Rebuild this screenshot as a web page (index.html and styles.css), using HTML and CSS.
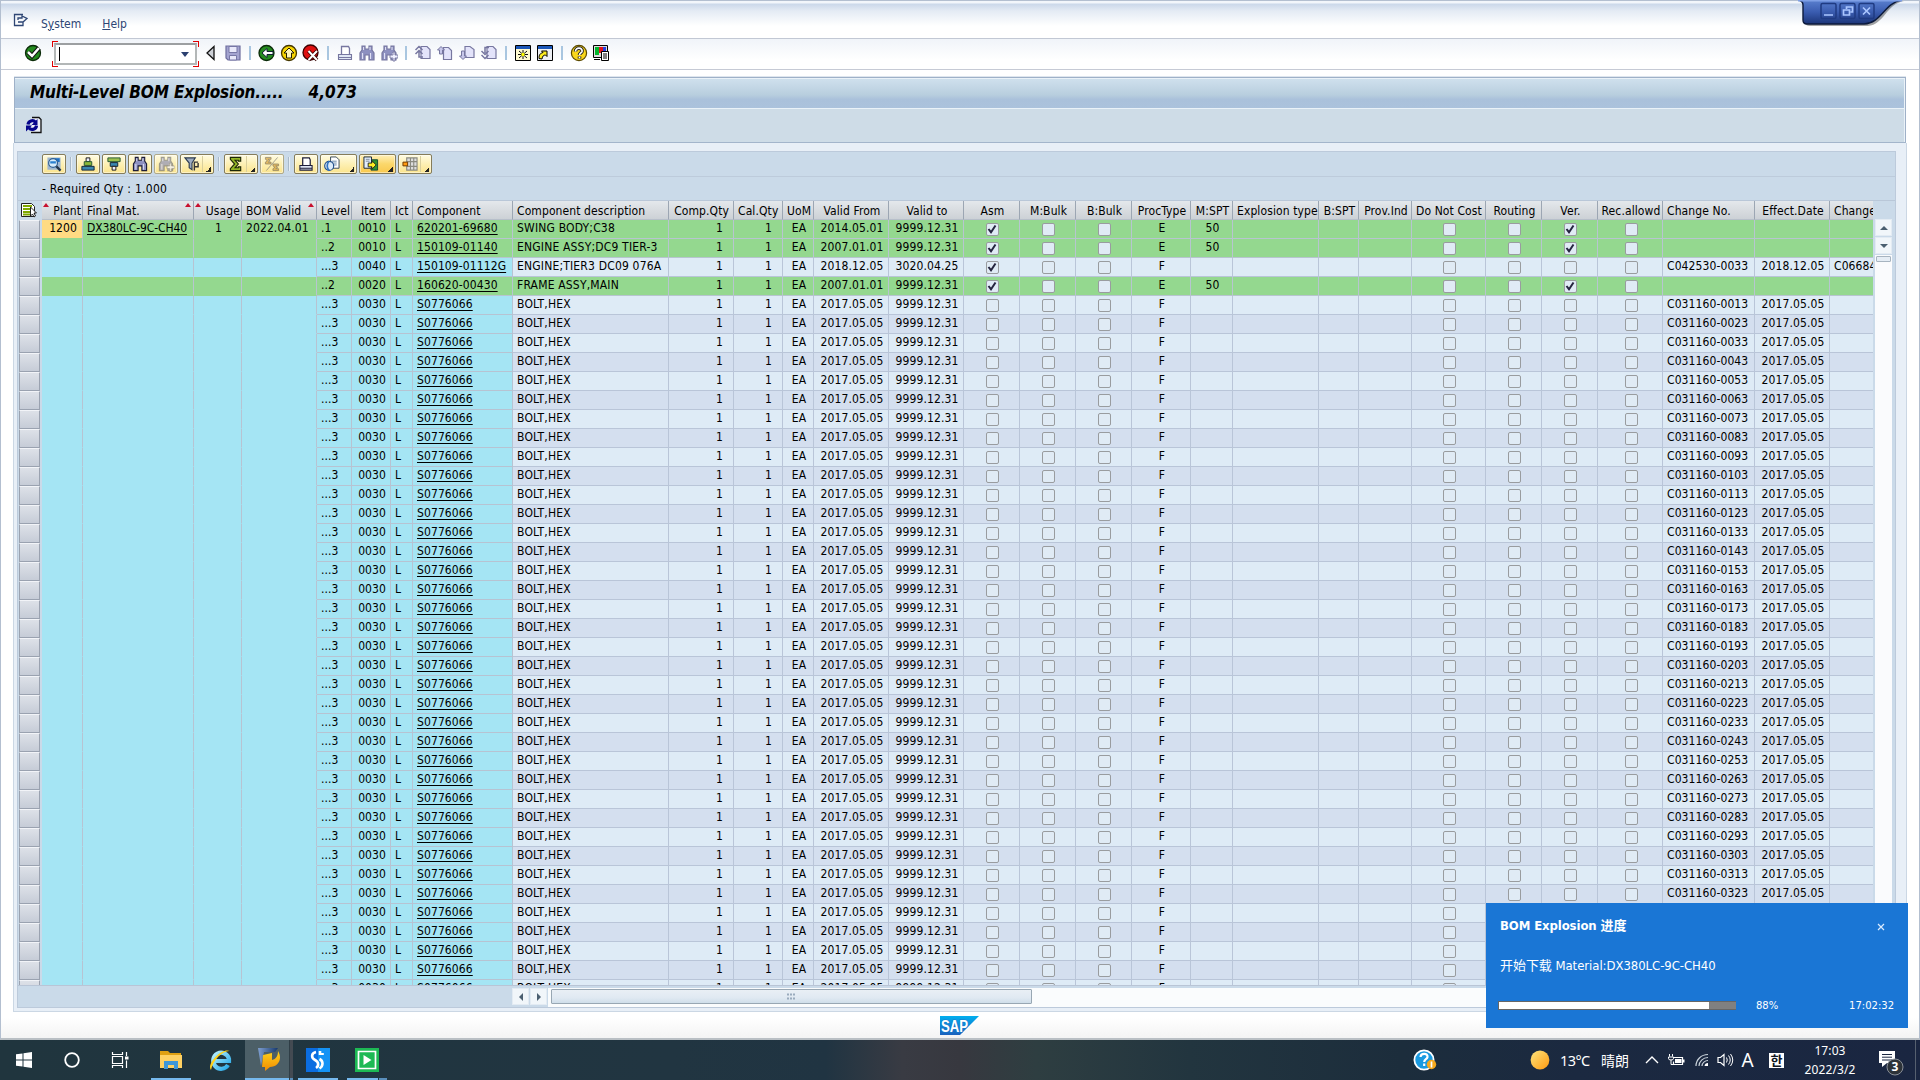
FILE: index.html
```html
<!DOCTYPE html>
<html lang="en">
<head>
<meta charset="utf-8">
<title>Multi-Level BOM Explosion</title>
<link rel="stylesheet" href="styles.css">
</head>
<body>
<svg width="0" height="0" class="defs">
  <defs>
    <linearGradient id="winBlue" x1="0" y1="0" x2="0" y2="1"><stop offset="0" stop-color="#5a80cf"/><stop offset=".5" stop-color="#3a5cb0"/><stop offset="1" stop-color="#1c3578"/></linearGradient>
    <linearGradient id="sapBlue" x1="0" y1="0" x2="0" y2="1"><stop offset="0" stop-color="#00aeef"/><stop offset="1" stop-color="#1a61bd"/></linearGradient>
    <linearGradient id="sun" x1="0" y1="0" x2="1" y2="1"><stop offset="0" stop-color="#ffe57d"/><stop offset="1" stop-color="#ff9a10"/></linearGradient>
    <linearGradient id="steel" x1="0" y1="0" x2="1" y2="0"><stop offset="0" stop-color="#7f9fd0"/><stop offset="1" stop-color="#16386d"/></linearGradient>
    <linearGradient id="gold" x1="0" y1="0" x2="0" y2="1"><stop offset="0" stop-color="#ffd21c"/><stop offset="1" stop-color="#f08a00"/></linearGradient>
    <linearGradient id="ie" x1="0" y1="0" x2="1" y2="1"><stop offset="0" stop-color="#b9f1ff"/><stop offset="1" stop-color="#23a8e8"/></linearGradient>
    <symbol id="find" viewBox="0 0 18 18"><path d="M4 2h3v3h4V2h3v4l2 3v7h-5v-5H7v5H2V9l2-3z" fill="#8d90c0" stroke="currentColor" stroke-width="1.2"/><path d="M4.6 9v6M12.6 9v6M5.6 3v3M12 3v3" stroke="#e8e8fa"/></symbol>
    <symbol id="findnext" viewBox="0 0 18 18"><use href="#find"/><path d="M10 11h3V8h2v3h3v3h-3v3h-2v-3h-3z" fill="#f0f0ff" stroke="currentColor" stroke-width=".9"/></symbol>
    <symbol id="print" viewBox="0 0 18 18"><path d="M5.500 10.500V2.500h7l1 2v6" fill="#fff" stroke="currentColor" stroke-width="1.300"/><path d="M2.500 10.500h13v3h-13zM2.500 13.500h13v2h-13z" fill="#dfe6f4" stroke="currentColor" stroke-width="1.100"/></symbol>
  </defs>
</svg>

<main class="window">
  <header class="menubar">
    <svg class="menu-icon" width="16" height="14" viewBox="0 0 16 14"><path d="M10 9.500v3H1.500V1.500H10M5 7V5h4V3l5 2.500-4 3.500H5" fill="none" stroke="#2e4674" stroke-width="1.300"/></svg>
    <span class="menu-item">S<u>y</u>stem</span>
    <span class="menu-item"><u>H</u>elp</span>
    <svg class="win-controls" width="106" height="30" viewBox="0 0 106 30">
      <path d="M2 1q5 1 5 6v15q0 4 5 4h58c16-1 18-22 36-25z" fill="#000" opacity=".35"/>
      <path d="M0 0q5 1 5 5v15q0 4 4 4h57C84 23 86 3 104 0z" fill="url(#winBlue)" stroke="#0c1a3c" stroke-width="1.400"/>
      <path d="M0 0h104" stroke="#7fa0e6" stroke-width="3"/>
      <g fill="none" stroke="#1f3b82" stroke-width="1.500"><rect x="23" y="3.500" width="15" height="15" rx="1.500"/><rect x="42" y="3.500" width="15" height="15" rx="1.500"/><rect x="61" y="3.500" width="15" height="15" rx="1.500"/></g>
      <g fill="none" stroke="#aac6ff" stroke-width="1.700"><path d="M26 15h9M45.500 10h6v5h-6zM48.500 9V7h6v5h-2M65 7.500l7 7M72 7.500l-7 7"/></g>
    </svg>
  </header>

  <nav class="toolbar">
    <svg width="18" height="18" viewBox="0 0 18 18"><circle cx="9" cy="9" r="7.500" fill="#238a1e" stroke="#0a2a08" stroke-width="1.300"/><path d="M4 8l4 4 7-8" fill="none" stroke="#111" stroke-width="4.500"/><path d="M4 8l4 4 7-8" fill="none" stroke="#fff" stroke-width="2.500"/></svg>
    <div class="command"><div class="command-box"><i class="caret"></i><i class="drop"></i></div></div>
    <svg class="tri" width="18" height="18" viewBox="0 0 18 18"><path d="M12 2.500v13L5 9z" fill="#cdd0d6" stroke="#111" stroke-width="1.300"/></svg>
    <svg width="18" height="18" viewBox="0 0 18 18"><path d="M2 2h14v14H4l-2-2z" fill="#a4a4d0" stroke="#6e6e9e" stroke-width="1.200"/><path d="M5 2.500h8v6H5zM5.500 11.500h7V16h-7z" fill="#e9e9fa" stroke="#7777a6"/></svg>
    <i class="sep"></i>
    <svg width="18" height="18" viewBox="0 0 18 18"><circle cx="8.500" cy="9" r="7.500" fill="#248b1f" stroke="#0a2a08" stroke-width="1.300"/><path d="M4 9l5-4.500v3h6v3H9v3z" fill="#fff" stroke="#123" stroke-width="1"/></svg>
    <svg width="18" height="18" viewBox="0 0 18 18"><circle cx="9" cy="9" r="7.500" fill="#f7d400" stroke="#443600" stroke-width="1.300"/><path d="M9 4l5 5h-2.500v5h-5V9H4z" fill="#fff6b8" stroke="#221c00" stroke-width="1"/></svg>
    <svg width="18" height="18" viewBox="0 0 18 18"><circle cx="8.500" cy="8.500" r="7.500" fill="#de1010" stroke="#3c0000" stroke-width="1.300"/><path d="M6.500 7l8.500 9M15 7l-8.500 9" stroke="#300" stroke-width="3.600"/><path d="M6.500 7l8.500 9M15 7l-8.500 9" stroke="#fff" stroke-width="2"/></svg>
    <i class="sep"></i>
    <svg class="dim" width="18" height="18"><use href="#print"/></svg>
    <svg class="dim" width="18" height="18"><use href="#find"/></svg>
    <svg class="dim" width="18" height="18"><use href="#findnext"/></svg>
    <i class="sep"></i>
    <svg width="18" height="18" viewBox="0 0 18 18"><path d="M7 2.500h6l3 3v9H7z" fill="#e3e3fa" stroke="#7777a0" stroke-width="1.200"/><path d="M1.500 6L5 2.500 8.500 6M1.500 10L5 6.500 8.500 10M5 8v5h4" fill="none" stroke="#7777a0" stroke-width="1.500"/></svg>
    <svg width="18" height="18" viewBox="0 0 18 18"><path d="M7.500 3.500h5l3 3v9h-8z" fill="#e3e3fa" stroke="#7777a0" stroke-width="1.200"/><path d="M1.500 6L5 2.500 8.500 6H6.500v4h-3V6z" fill="#c7c7ea" stroke="#7777a0"/></svg>
    <svg width="18" height="18" viewBox="0 0 18 18"><path d="M7 2.500h5l4 3v8H7z" fill="#e3e3fa" stroke="#7777a0" stroke-width="1.200"/><path d="M1.500 12L5 15.500 8.500 12H6.500V7h-3v5z" fill="#c7c7ea" stroke="#7777a0"/></svg>
    <svg width="18" height="18" viewBox="0 0 18 18"><path d="M7 2.500h6l3 3v9H7z" fill="#e3e3fa" stroke="#7777a0" stroke-width="1.200"/><path d="M1.500 7L5 10.500 8.500 7M1.500 11L5 14.500 8.500 11M5 9V3.500h4" fill="none" stroke="#7777a0" stroke-width="1.500"/></svg>
    <i class="sep"></i>
    <svg width="18" height="18" viewBox="0 0 18 18"><path d="M1.500 1.500h15v15h-15z" fill="#fffbd0" stroke="#000"/><path d="M2 2h14v3H2z" fill="#1a56b8"/><path d="M9 6v9M4 10.500h10M5 7l8 7M13 7l-8 7" stroke="#111"/><circle cx="9" cy="10.500" r="1.700" fill="#ff0"/></svg>
    <svg width="18" height="18" viewBox="0 0 18 18"><path d="M1.500 1.500h15v15h-15z" fill="#eef0f4" stroke="#000"/><path d="M2 2h14v3H2z" fill="#1a56b8"/><path d="M3 14.500c0-4 1-5 4-6L5.500 7H11v5.500L9.500 11c-2 0-3 1-3.500 4z" fill="#ffee20" stroke="#000"/></svg>
    <i class="sep"></i>
    <svg width="18" height="18" viewBox="0 0 18 18"><circle cx="9" cy="9" r="7.600" fill="#f9d71c" stroke="#5c4a00" stroke-width="1.200"/><path d="M5.500 7.500c0-5 7.500-4 6.500 0-.5 1.500-2.500 1.500-2.500 3.500M9.500 12.500v2" fill="none" stroke="#222" stroke-width="3.600"/><path d="M5.500 7.500c0-5 7.500-4 6.500 0-.5 1.500-2.500 1.500-2.500 3.500M9.500 12.700v1.600" fill="none" stroke="#fff" stroke-width="1.700"/></svg>
    <svg width="18" height="18" viewBox="0 0 18 18"><path d="M1.500 1.500h14v12h-14z" fill="#ddd" stroke="#000"/><path d="M3 3h4v8H3z" fill="#00b52a"/><path d="M7 3h4v6H7z" fill="#e3121a"/><path d="M11 3h3v6h-3z" fill="#2440e0"/><path d="M2 15.500h6" stroke="#000"/><path d="M9.500 7.500h7v9h-7z" fill="#fff" stroke="#000"/><path d="M11 10h4M11 12h4M11 14h4" stroke="#000"/></svg>
  </nav>

  <section class="title-panel">
    <h1 class="title">Multi-Level BOM Explosion.....<span>4,073</span></h1>
    <div class="app-bar">
      <svg width="18" height="18" viewBox="0 0 18 18"><path d="M7 1.500h7l2 2v13H6" fill="#eef2fa" stroke="#111" stroke-width="1.300"/><path d="M3 8.500a4.300 4.300 0 0 1 7.500-2.300M11.500 9.500a4.300 4.300 0 0 1-7.500 2.500" fill="none" stroke="#06068c" stroke-width="3.200"/><path d="M12.500 3v6H6.500zM1 15.500V9.500h6z" fill="#06068c"/></svg>
    </div>
  </section>

  <section class="content">
    <div class="alv">
      <div class="alv-bar">
        <span class="btn"><svg width="18" height="18" viewBox="0 0 18 18"><path d="M2 2h14v13H2z" fill="#9fb6cf"/><path d="M10 3h5v4h-5z" fill="#1c6fc4"/><circle cx="8" cy="8" r="4.700" fill="#d8ecfb" stroke="#2f5f92" stroke-width="1.300"/><path d="M5 6h6v2.500H5z" fill="#2b80cf"/><path d="M11.500 11.500l4.500 4.500" stroke="#24364c" stroke-width="2.400"/></svg></span>
        <i class="bar-sep"></i>
        <span class="btn"><svg width="18" height="18" viewBox="0 0 18 18"><path d="M7 2.500h4v4H7z" fill="#eef" stroke="#111"/><path d="M5 6.500h8v4H5z" fill="#8bb83a" stroke="#253"/><path d="M2.500 11.500h13v4h-13z" fill="#3b86b0" stroke="#123"/></svg></span>
        <span class="btn"><svg width="18" height="18" viewBox="0 0 18 18"><path d="M2.500 2.500h13v4h-13z" fill="#9cc04e" stroke="#253"/><path d="M5 7.500h8v4H5z" fill="#3b86b0" stroke="#123"/><path d="M7 11.500h4v4H7z" fill="#eef" stroke="#111"/></svg></span>
        <span class="btn dark"><svg width="18" height="18"><use href="#find"/></svg></span>
        <span class="btn off"><svg width="18" height="18"><use href="#findnext"/></svg></span>
        <span class="btn split"><svg width="18" height="18" viewBox="0 0 18 18"><path d="M1.500 2.500h11L9 8v7l-3-2V8z" fill="#9cabc0" stroke="#2c3b50" stroke-width="1.200"/><path d="M11.500 16V7h4M11.500 12h4V8" fill="none" stroke="#333" stroke-width="1.500"/></svg></span>
        <i class="bar-sep"></i>
        <span class="btn split"><svg width="18" height="18" viewBox="0 0 18 18"><path d="M3 2h11v4h-2.500V5H8l3.500 4L8 13h3.500v-1H14v4H3v-2l4.500-5L3 4z" fill="#93b526" stroke="#1c2606" stroke-width="1.200"/></svg></span>
        <span class="btn off"><svg width="18" height="18" viewBox="0 0 18 18"><path d="M2 2h6v2H5l2 1.500L5 7h3v2H2V7l2-1.500L2 4zM10 9h6v2h-3l2 1.500-2 1.500h3v2h-6v-2l2-1.500L10 11z" fill="#e8a010" stroke="#654" stroke-width=".8"/><path d="M3 16L15 2" stroke="#777"/></svg></span>
        <i class="bar-sep"></i>
        <span class="btn ink"><svg width="18" height="18"><use href="#print"/></svg></span>
        <span class="btn wide"><svg width="18" height="18" viewBox="0 0 18 18"><path d="M7.500 1.500h6l3 3v9h-9z" fill="#fff" stroke="#345"/><path d="M9 6h5M9 8h5M9 10h5" stroke="#68a"/><circle cx="6" cy="11" r="4.800" fill="#dcecfa" stroke="#23508c" stroke-width="1.200"/><path d="M6 6a7 7 0 0 0 0 10" fill="none" stroke="#3374c0" stroke-width="1.800"/></svg></span>
        <span class="btn wide hot"><svg width="18" height="18" viewBox="0 0 18 18"><path d="M9 4.500h7v11H9z" fill="#2f9130" stroke="#143"/><path d="M1.500 1.500h8v12h-8z" fill="#e4eefb" stroke="#123"/><path d="M3.500 4h4M3.500 6h4" stroke="#789"/><path d="M6 8h4V5.500l4.500 4.500-4.500 4.500V12H6z" fill="#ffee22" stroke="#222"/></svg></span>
        <span class="btn split"><svg width="18" height="18" viewBox="0 0 18 18"><path d="M5.500 2.500h11v13h-11zM9.500 2.500v13M13 2.500v13M5 6.500h11M5 11.500h11" fill="#ddd" stroke="#8a8a80" stroke-width="1.200"/><path d="M1.500 7h5v4h-5z" fill="#ff9a10" stroke="#6b3800"/></svg></span>
      </div>
      <div class="required">- Required Qty : 1.000</div>
      <div class="table-area">
        <div class="grid" id="grid"></div>
        <div class="vscroll"><span class="sb up"></span><span class="sb down"></span><span class="vtrack"><i class="vthumb"></i></span></div>
      </div>
      <div class="hscroll"><span class="sb left"></span><span class="sb right"></span><span class="htrack"><i class="hthumb"><svg width="9" height="7" viewBox="0 0 9 7"><path d="M0 1.500h9M0 5.500h9" stroke="#9aabbd" stroke-width="2" stroke-dasharray="2 1"/></svg></i></span></div>
    </div>
  </section>

  <footer class="status">
    <svg width="39" height="19" viewBox="0 0 39 19"><path d="M0 0h39L20 19H0z" fill="url(#sapBlue)"/><text x="1" y="15.500" class="sap-word" textLength="27" lengthAdjust="spacingAndGlyphs">SAP</text></svg>
  </footer>
</main>

<aside class="toast">
  <div class="toast-head"><strong>BOM Explosion 进度</strong><svg width="8" height="8" viewBox="0 0 8 8"><path d="M1 1l6 6M7 1L1 7" stroke="#dcecff" stroke-width="1.200"/></svg></div>
  <p class="toast-text">开始下载 Material:DX380LC-9C-CH40</p>
  <div class="toast-foot"><span class="progress"><i style="width:88.500%"></i></span><span class="pct">88%</span><span class="time">17:02:32</span></div>
</aside>

<footer class="taskbar">
  <div class="apps">
    <span class="app"><svg width="16" height="16" viewBox="0 0 16 16"><path d="M0 2.300l6.500-.9v6.100H0zM7.500 1.200L16 0v7.500H7.500zM0 8.500h6.500v6.100L0 13.700zM7.500 8.500H16V16l-8.500-1.200z" fill="#fff"/></svg></span>
    <span class="app"><svg width="18" height="18" viewBox="0 0 18 18"><circle cx="9" cy="9" r="6.800" fill="none" stroke="#fff" stroke-width="1.800"/></svg></span>
    <span class="app"><svg width="18" height="18" viewBox="0 0 18 18"><path d="M1.500 1v2.500h10V1M1.500 17v-2.500h10V17M1.500 5.500h10v7h-10zM15.500 1v4M15.500 9.500V17" fill="none" stroke="#fff" stroke-width="1.200"/><path d="M14 5.500h3.500v3H14z" fill="#fff"/></svg></span>
    <span class="app run first"><svg width="24" height="20" viewBox="0 0 24 20"><path d="M1 1h8l2 2h11v15H1z" fill="#e0a012"/><path d="M1 5h22v13H1z" fill="#ffd163"/><path d="M5 19v-8h14v8h-4v-4H9v4z" fill="#3f97d8"/></svg></span>
    <span class="app"><svg width="24" height="24" viewBox="0 0 24 24"><path d="M20 17a8 8 0 1 1 1-6v2H7" fill="none" stroke="url(#ie)" stroke-width="4.200"/><path d="M3 22C-2 16 14-1 22 3c-6-1-17 8-19 19z" fill="#ffd21c"/></svg></span>
    <span class="app run active"><svg width="24" height="24" viewBox="0 0 24 24"><path d="M1 0h20l-3 4H7l-3 14z" fill="url(#steel)"/><path d="M6 7l9-2v7c4-1 6-4 6-9 5 8 0 16-8 16l-5 4V19H5z" fill="url(#gold)"/></svg></span>
    <span class="app run"><svg width="24" height="24" viewBox="0 0 24 24"><path d="M0 0h24v24H0z" fill="#0b6de0"/><path d="M12 0h12v24H12z" fill="#1593f5"/><path d="M10 4C5 5 5 10 9 12s4 6 1 8M14 3v4M13.500 11c4 2 4 7 0 9.500M16.500 5v2" fill="none" stroke="#fff" stroke-width="2.600"/></svg></span>
    <span class="app run pair"><svg width="24" height="24" viewBox="0 0 24 24"><path d="M0 0h24v24H0z" fill="#1db954"/><path d="M3.500 3.500h17v17h-17z" fill="none" stroke="#fff" stroke-width="1.700"/><path d="M8.500 7l8 5-8 5z" fill="#fff"/></svg></span>
  </div>
  <div class="tray">
    <svg class="help" width="24" height="22" viewBox="0 0 24 22"><circle cx="11" cy="11" r="9.600" fill="#1a9ae0" stroke="#fff" stroke-width="1.800"/><path d="M7.500 8c.5-4.500 7.500-4 7 0-.3 2.300-3.300 2.200-3.300 5M11.200 14.500V17" fill="none" stroke="#fff" stroke-width="2.200"/><circle cx="18.500" cy="15.500" r="4.700" fill="#f5a81c"/><path d="M18.500 12.500v6" stroke="#fff" stroke-width="1.700"/></svg>
    <svg class="sun" width="20" height="20" viewBox="0 0 20 20"><circle cx="10" cy="10" r="9.400" fill="url(#sun)"/></svg>
    <span class="temp">13°C</span><span class="sky">晴朗</span>
    <svg class="chev" width="14" height="8" viewBox="0 0 14 8"><path d="M1 7l6-6 6 6" fill="none" stroke="#fff" stroke-width="1.400"/></svg>
    <svg class="bat" width="17" height="13" viewBox="0 0 17 13"><path d="M5.500 3.500h9v7h-9v-3" fill="none" stroke="#fff" stroke-width="1.200"/><path d="M7 5h6.500v4H7zM15 5.500h1.500v3H15z" fill="#fff"/><path d="M1.500 0v2.500M4.500 0v2.500M.5 3h5v1.500q0 1.500-2.500 1.500T.5 4.500zM3 6v4.500h3" fill="none" stroke="#fff"/></svg>
    <svg class="wifi" width="14" height="14" viewBox="0 0 14 14"><path d="M1 13C1 7 6 1.500 13 1.500M4 13c0-4.500 4-8.500 9-8.500M7 13c0-3 3-5.500 6-5.500" fill="none" stroke="#c9d2da" stroke-width="1.200"/><path d="M9.500 13a3.500 3.500 0 0 1 3.500-3v3z" fill="#fff"/></svg>
    <svg class="vol" width="17" height="14" viewBox="0 0 17 14"><path d="M1 4.500h2.500L7 1.500v11l-3.500-3H1z" fill="none" stroke="#fff" stroke-width="1.200"/><path d="M9.500 4.500q1.500 2.500 0 5M11.500 2.500q3.500 4.500 0 9M13.500 1q4.500 6 0 12" fill="none" stroke="#fff"/></svg>
    <span class="ime">A</span>
    <span class="han">한</span>
    <span class="clock">17:03<br>2022/3/2</span>
    <svg class="notif" width="26" height="26" viewBox="0 0 26 26"><path d="M1 1h16v12H9l-5 4v-4H1z" fill="#fff"/><path d="M4 4.500h10M4 7.200h10M4 10h10" stroke="#1b2740"/><circle cx="17" cy="17" r="8" fill="#2c3238" stroke="#8a9098"/><text x="17" y="21.200" class="badge">3</text></svg>
    <i class="peek"></i>
  </div>
</footer>
<script src="app.js"></script>
</body>
</html>
```
FILE: styles.css
```css
* { box-sizing: border-box; }
body {
  margin: 0;
  width: 1920px;
  height: 1080px;
  overflow: hidden;
  font-family: "DejaVu Sans Condensed", "DejaVu Sans", "Noto Sans CJK SC", sans-serif;
  font-stretch: condensed;
  font-size: 12px;
  color: #000;
  background: #fff;
  display: flex;
  flex-direction: column;
}
svg { display: block; flex: none; }
.defs { position: absolute; }

.window {
  height: 1040px;
  flex: none;
  display: flex;
  flex-direction: column;
  border: 1px solid #b3bfd0;
  border-bottom: 2px solid #b9bfc4;
  background: linear-gradient(#fff 98%, #f4f4f4);
}
.menubar {
  position: relative;
  height: 38px;
  flex: none;
  padding: 4px 0 0 12px;
  display: flex;
  align-items: center;
  border-bottom: 1px solid #c2c8d4;
  background: linear-gradient(#f2f6fb 0 2px, #cbd8ea 3px, #e4ebf4 10px, #fff 25px);
  color: #2e4674;
}
.menu-icon { margin: -4px 10px 0 0; }
.menu-item { margin: 4px 19px 0 2px; }
.win-controls { position: absolute; top: -1px; right: 15px; }

.toolbar {
  height: 31px;
  flex: none;
  padding-left: 23px;
  display: flex;
  align-items: center;
  gap: 4.15px;
  border-bottom: 1px solid #c6cad5;
  background: linear-gradient(#f0f4f9, #fff 70%);
}
.toolbar > svg { margin-bottom: 3px; }
.dim { color: #7777a0; }
.sep { width: 2px; height: 14px; margin: 0 2.7px 2px; background: #a9c6e0; }
.command {
  width: 147px;
  height: 26px;
  margin: 0 0 0 6px;
  padding: 2px;
  background:
    linear-gradient(#e00000, #e00000) 0 0 / 6px 1px no-repeat, linear-gradient(#e00000, #e00000) 0 0 / 1px 6px no-repeat,
    linear-gradient(#e00000, #e00000) 100% 0 / 6px 1px no-repeat, linear-gradient(#e00000, #e00000) 100% 0 / 1px 6px no-repeat,
    linear-gradient(#e00000, #e00000) 0 100% / 6px 1px no-repeat, linear-gradient(#e00000, #e00000) 0 100% / 1px 6px no-repeat,
    linear-gradient(#e00000, #e00000) 100% 100% / 6px 1px no-repeat, linear-gradient(#e00000, #e00000) 100% 100% / 1px 6px no-repeat;
}
.command-box {
  height: 22px;
  padding: 0 6px 0 3px;
  display: flex;
  align-items: center;
  justify-content: space-between;
  border: 2px solid #b3b7b7;
  border-top-color: #9c9fa1;
  background: #fff;
}
.caret { width: 1px; height: 14px; background: #000; }
.drop { border: 4.5px solid transparent; border-top: 5px solid #2b4070; border-bottom: 0; }
.tri { margin: 0 0 0 -1px; }

.title-panel {
  flex: none;
  margin: 7px 13px 0;
  height: 66px;
  border: 1px solid #9fb1c8;
  border-bottom: 1px solid #a3b5cb;
  box-shadow: 0 -1px #dfe6ee;
}
.title {
  margin: 0;
  height: 31px;
  padding: 0 0 0 15px;
  font: italic bold 17px/26px "DejaVu Sans Condensed", "DejaVu Sans", sans-serif;
  font-stretch: condensed;
  letter-spacing: -.16px;
  border: solid #eaf2f8;
  border-width: 1px 1px 1px 0;
  background: linear-gradient(#cfe0ed, #b8cede 55%, #aac1db 70%, #abc2dc);
}
.title span { margin-left: 25px; letter-spacing: 0; }
.app-bar { height: 33px; padding: 7px 0 0 10px; border-right: 1px solid #eaf2f8; background: #cedce7; }

.content {
  flex: none;
  height: 869px;
  margin: 0 12px;
  padding: 8px 10px 0 3px;
  border: 1px solid #cbd7e4;
  border-top: 0;
  background: #e8eff7;
}
.alv { height: 857px; border: 1px solid #bccadb; background: #cadae9; }
.alv-bar {
  height: 25px;
  padding: 2px 0 0 24px;
  display: flex;
  gap: 2px;
  border-bottom: 1px solid #bdcbdb;
}
.btn {
  width: 24px;
  height: 20px;
  padding-left: 2px;
  display: flex;
  align-items: center;
  border: 1px solid #857c5a;
  border-radius: 2px;
  background: linear-gradient(#fffbe2, #fdf0b4 50%, #fbe48d);
  box-shadow: inset 0 0 0 1px rgba(255, 255, 255, .45);
}
.btn svg { transform: scale(.94); }
.dark, .ink { color: #1c1c38; }
.off { color: #777; border-color: #b0a988; }
.off svg { opacity: .7; filter: saturate(.7); }
.split, .wide {
  width: 34px;
  background:
    linear-gradient(135deg, transparent 50%, #222 50%) 25px 12px / 5px 5px no-repeat,
    linear-gradient(#d9cf9d, #d9cf9d) 21px 1px / 1px 16px no-repeat,
    linear-gradient(#fffbe2, #fdf0b4 50%, #fbe48d);
}
.wide {
  width: 37px;
  background:
    linear-gradient(135deg, transparent 50%, #222 50%) 28px 12px / 5px 5px no-repeat,
    linear-gradient(#fffbe2, #fdf0b4 50%, #fbe48d);
}
.hot {
  background:
    linear-gradient(135deg, transparent 50%, #222 50%) 28px 12px / 5px 5px no-repeat,
    linear-gradient(#fff0b8, #fbd76b 50%, #f9c94e);
}
.bar-sep { width: 2px; height: 14px; margin: 3px 2px 0; background: #a9b9c9; border-right: 1px solid #e6eef5; }
.required { height: 24px; padding: 0 0 0 24px; line-height: 24px; letter-spacing: .27px; border-bottom: 1px solid #b9c7d8; }

.table-area { display: flex; height: 785px; }
.grid { width: 1855px; flex: none; height: 785px; overflow: hidden; letter-spacing: .1px; border-bottom: 1px solid #b9c5d6; }
.row {
  display: grid;
  grid-template-columns: 24px 41px 111px 48px 75px 35px 39px 22px 100px 156px 65px 49px 31px 75px 75px 56px 56px 56px 59px 42px 86px 40px 53px 74px 56px 56px 65px 92px 75px 44px;
  height: 19px;
}
.cell {
  height: 19px;
  padding: 0 4px;
  overflow: hidden;
  line-height: 16px;
  white-space: pre;
  border-right: 1px solid #b9c5d8;
  border-bottom: 1px solid #b9c5d8;
  background: #deebf6;
}
.row.even .cell { background: #d4dfef; }
.row .cell.key { background: #a5e5f4; border-color: #b7c3d2; }
.row .cell.blank { border-bottom-color: #a5e5f4; }
.row.green .cell { background: #94d88f; border-color: #b7c5cf; }
.row.green .cell.blank { border-bottom-color: #94d88f; }
.row .cell.focus { background: #ffdb83; padding-right: 5px; }
.r { text-align: right; }
.c { text-align: center; padding: 0 3px 0 5px; }
.qty { padding-right: 10px; }
.desc { letter-spacing: .18px; }
.mat { letter-spacing: -.1px; }
.link { text-decoration: underline; text-underline-offset: 2px; }
.row.head .cell {
  position: relative;
  line-height: 20px;
  border-right: 1px solid #9ca6b3;
  border-bottom: 1px solid #b7bfca;
  background: linear-gradient(#e4e8ec, #d6dade 60%, #ccd1d6);
}
.row.head .cell.r { padding-right: 1px; }
.row.head .cell.pr { padding-right: 4px; }
.row.head .cell.c { padding: 0 0 0 2px; }
.row.head .cell.tight { padding: 0 0 0 4px; }
.sort { position: absolute; top: 2px; border: 3.5px solid transparent; border-top: 0; border-bottom: 4px solid #c8102e; }
.sort.l { left: 1px; }
.sort.rt { right: 2px; }
.row .cell.sel, .row.even .cell.sel, .row.green .cell.sel {
  margin: 0 2px 0 1px;
  padding: 0;
  border: 1px solid #9aa2b0;
  border-top-color: #f2f4f8;
  background: linear-gradient(#dde1e8, #c6ccd7);
}
.row.head .cell.sel { border: 0; background: none; }
.check {
  display: block;
  width: 13px;
  height: 13px;
  margin: 3px auto 0;
  border: 1.500px solid #999c9f;
  border-radius: 2px;
  background: #e0ebf5;
}

.vscroll { width: 18px; margin: 18px 0 0 2px; display: flex; flex-direction: column; gap: 1px; }
.sb { width: 17px; height: 17px; flex: none; display: flex; align-items: center; justify-content: center; background: #f1f6fa; border: 1px solid #e3ebf3; }
.sb::before { content: ""; border: 4px solid transparent; }
.up::before { border-bottom-color: #4b5f70; border-top: 0; }
.down::before { border-top-color: #4b5f70; border-bottom: 0; }
.left::before { border-right-color: #4b5f70; border-left: 0; }
.right::before { border-left-color: #4b5f70; border-right: 0; }
.vtrack { flex: 1; width: 17px; padding: 1px; background: #fafbfd; }
.vthumb { display: block; height: 6px; border: 1px solid #a7b4c0; border-radius: 1px; background: #e5edf5; }
.hscroll { height: 19px; margin: 2px 20px 0 494px; display: flex; gap: 1px; }
.hscroll .sb { width: 17px; }
.htrack { flex: 1; padding: 1px 3px; background: #fafcfd; }
.hthumb { width: 481px; height: 15px; display: flex; align-items: center; justify-content: center; border: 1px solid #98a7b3; border-radius: 1px; background: linear-gradient(#e9eff5, #e0e9f2 60%, #cfdeea); }

.status { flex: 1; padding: 4px 0 0 939px; }
.sap-word { font: bold 16px "Liberation Sans", sans-serif; fill: #fff; stroke: #1a78cc; stroke-width: 1.200px; paint-order: stroke; }

.toast {
  position: absolute;
  left: 1486px;
  top: 903px;
  width: 422px;
  height: 125px;
  padding: 12px 14px 0 14px;
  background: #1a76d5;
  color: #fff;
}
.toast-head { display: flex; justify-content: space-between; align-items: center; height: 20px; padding-right: 9px; font-size: 13px; letter-spacing: -.1px; }
.toast-head strong { margin-top: -2px; }
.toast-head svg { margin-top: 4px; }
.toast-text { margin: 21px 0 0; height: 20px; line-height: 20px; font-size: 13px; letter-spacing: -.05px; }
.toast-foot { display: flex; align-items: center; margin: 20px 0 0 -2px; height: 19px; font: 10px "DejaVu Sans", sans-serif; }
.progress { width: 238px; height: 9px; border: 1px solid #666; border-right: 0; background: #808080; }
.progress i { display: block; height: 7px; background: #fff; }
.pct { margin-left: 20px; }
.time { margin-left: auto; }

.taskbar {
  height: 40px;
  flex: none;
  display: flex;
  justify-content: space-between;
  color: #fff;
  background: linear-gradient(90deg, #20353e 0, #213541 35%, #203442 43%, #393b43 47%, #37383f 50%, #2e3e41 54%, #22353f 62%, #1c2d3c 73%, #1b2940 82%, #1a2641);
}
.apps { display: flex; }
.app { width: 48px; height: 40px; display: flex; align-items: center; justify-content: center; }
.app ~ .app.first { margin-left: 3px; }
.first ~ .app { margin-left: 1px; }
.run { background: linear-gradient(#76b9ed, #76b9ed) 50% 100% / 40px 2px no-repeat; }
.active {
  background:
    linear-gradient(#76b9ed, #76b9ed) 0 100% / 44px 2px no-repeat,
    linear-gradient(#5a8fbc, #5a8fbc) 45px 100% / 3px 2px no-repeat,
    linear-gradient(90deg, #4c5f67 44px, #2f3e46 44px 45px, #434a52 45px);
}
.pair {
  background:
    linear-gradient(#76b9ed, #76b9ed) 4px 100% / 31px 2px no-repeat,
    linear-gradient(#5a8fbc, #5a8fbc) 36px 100% / 8px 2px no-repeat;
}
.tray { display: flex; align-items: center; font-family: "Noto Sans", "Noto Sans CJK SC", sans-serif; }
.sun { margin: 0 10px 0 93px; }
.temp { width: 31px; margin-right: 10px; font-size: 14.500px; letter-spacing: -.6px; white-space: nowrap; }
.sky { width: 28px; margin-right: 16px; font: 14px "Noto Sans CJK SC", sans-serif; }
.chev { margin-right: 9px; }
.bat { margin-right: 10px; }
.wifi { margin-right: 8px; }
.vol { margin-right: 6px; }
.ime { width: 15px; margin-right: 14px; font-size: 19px; line-height: 38px; text-align: center; }
.han { width: 15px; height: 15px; background: #fff; color: #10161f; font: bold 13px/14px "Noto Sans CJK KR", sans-serif; text-align: center; overflow: hidden; }
.clock { width: 60px; margin: 0 18px 0 16px; font-size: 12px; line-height: 19px; letter-spacing: .1px; text-align: center; }
.notif { margin: 5px 11px 0 0; }
.badge { font: bold 12px "Noto Sans", sans-serif; fill: #fff; text-anchor: middle; }
.peek { width: 1px; height: 40px; margin-right: 4px; background: #56606f; }
```
FILE: app.js
```js
const columns = [
  ["Plant", "r"], ["Final Mat.", ""], ["Usage", "r"], ["BOM Valid", ""], ["Level", "tight"],
  ["Item", "r pr"], ["Ict", "tight"], ["Component", ""], ["Component description", ""],
  ["Comp.Qty", "r pr"], ["Cal.Qty", "r pr"], ["UoM", "c"], ["Valid From", "c"], ["Valid to", "c"],
  ["Asm", "c"], ["M:Bulk", "c"], ["B:Bulk", "c"], ["ProcType", "c"], ["M:SPT", "c"],
  ["Explosion type", "tight"], ["B:SPT", "c"], ["Prov.Ind", "c"], ["Do Not Cost", "tight"],
  ["Routing", "c"], ["Ver.", "c"], ["Rec.allowd", "c"], ["Change No.", ""], ["Effect.Date", "c"], ["Change", "tight"]
];
const sorts = { 0: "l", 1: "rt", 2: "l", 3: "rt" };
const listIcon = '<svg width="20" height="18" viewBox="0 0 20 18"><path d="M2.5 2.500h10l3 3v10h-13z" fill="#fff" stroke="#222"/><path d="M4 5h9M4 8h9M4 11h8M4 13.500h8" stroke="#7fa800" stroke-width="1.800"/><path d="M11.500 6v9l2-2 1.500 3 1.500-1-1.500-3h2.500z" fill="#fff" stroke="#111" stroke-width=".9"/></svg>';
const tick = '<svg width="10" height="10" viewBox="0 0 10 10"><path d="M1.500 5l2.500 3.200L8.500 1.500" fill="none" stroke="#25253f" stroke-width="2"/></svg>';

const top4 = [
  [".1", "0010", "620201-69680", "SWING BODY;C38", "2014.05.01", "9999.12.31", "", "", ""],
  ["..2", "0010", "150109-01140", "ENGINE ASSY;DC9 TIER-3", "2007.01.01", "9999.12.31", "", "", ""],
  ["...3", "0040", "150109-01112G", "ENGINE;TIER3 DC09 076A", "2018.12.05", "3020.04.25", "C042530-0033", "2018.12.05", "C06684"],
  ["..2", "0020", "160620-00430", "FRAME ASSY,MAIN", "2007.01.01", "9999.12.31", "", "", ""]
];

const cell = (cls, html) => `<div class="cell ${cls}">${html}</div>`;
const box = on => `<span class="check">${on ? tick : ""}</span>`;

let html = '<div class="row head">' + cell("sel", listIcon) +
  columns.map(([t, c], i) => cell(c, t + (sorts[i] ? `<i class="sort ${sorts[i]}"></i>` : ""))).join("") + "</div>";

for (let n = 1; n <= 41; n++) {
  const green = n === 1 || n === 2 || n === 4;
  const d = top4[n - 1] || ["...3", "0030", "S0776066", "BOLT,HEX", "2017.05.05", "9999.12.31",
    "C031160-" + String((n - 4) * 10 + 3).padStart(4, "0"), "2017.05.05", ""];
  const first = n === 1;
  html += `<div class="row ${green ? "green" : n % 2 ? "" : "even"}">` +
    cell("sel", "") +
    cell("key blank r" + (first ? " focus" : ""), first ? "1200" : "") +
    cell("key blank link mat", first ? "DX380LC-9C-CH40" : "") +
    cell("key blank c", first ? "1" : "") +
    cell("key blank", first ? "2022.04.01" : "") +
    cell("key", d[0]) + cell("key r", d[1]) + cell("key", "L") + cell("key link", d[2]) +
    cell("desc", d[3]) + cell("r qty", "1") + cell("r qty", "1") + cell("c", "EA") +
    cell("c", d[4]) + cell("c", d[5]) +
    cell("c", box(n < 5)) + cell("c", box(false)) + cell("c", box(false)) +
    cell("c", green ? "E" : "F") + cell("c", green ? "50" : "") +
    cell("", "") + cell("", "") + cell("", "") +
    cell("c", box(false)) + cell("c", box(false)) + cell("c", box(green)) + cell("c", box(false)) +
    cell("", d[6]) + cell("c", d[7]) + cell("", d[8]) + "</div>";
}
document.getElementById("grid").innerHTML = html;
```
